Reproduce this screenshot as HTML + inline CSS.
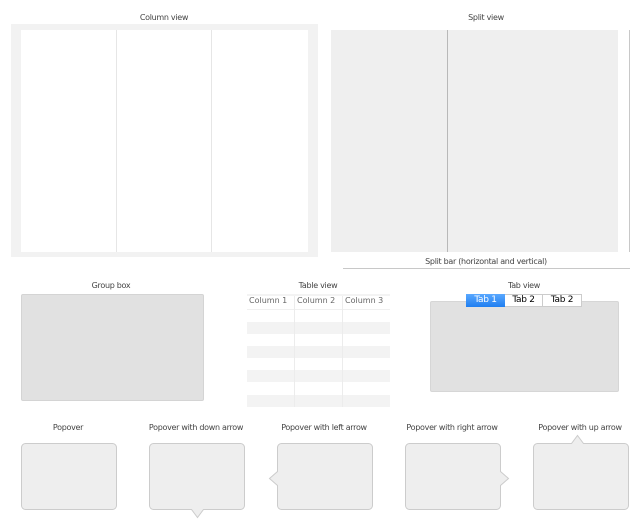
<!DOCTYPE html>
<html><head><style>
body{margin:0;width:640px;height:530px;background:#fff;position:relative;overflow:hidden;font-family:"DejaVu Sans","Liberation Sans",sans-serif;font-size:8px;color:#444}
div{position:absolute;box-sizing:border-box}
.l{text-align:center;white-space:nowrap;letter-spacing:-0.3px}
.pop{background:#eee;border:1px solid #ccc;border-radius:4px;width:96px;height:67px;top:443px}
.th{font-size:8px;color:#666;top:296px}
.st{background:#f3f3f3;left:247px;width:143px;height:12px}
</style></head><body>
<div class="l" style="left:114px;top:13px;width:100px">Column view</div>
<div style="left:11px;top:24px;width:307px;height:233px;background:#f2f2f2"></div>
<div style="left:21px;top:30px;width:287px;height:222px;background:#fff"></div>
<div style="left:116px;top:30px;width:1px;height:222px;background:#e6e6e6"></div>
<div style="left:211px;top:30px;width:1px;height:222px;background:#e6e6e6"></div>

<div class="l" style="left:436px;top:13px;width:100px">Split view</div>
<div style="left:331px;top:30px;width:287px;height:222px;background:#efefef"></div>
<div style="left:447px;top:30px;width:1px;height:222px;background:#b8b8b8"></div>
<div style="left:629px;top:30px;width:1px;height:222px;background:#c8c8c8"></div>
<div class="l" style="left:386px;top:257px;width:200px">Split bar (horizontal and vertical)</div>
<div style="left:343px;top:268px;width:287px;height:1px;background:#c8c8c8"></div>

<div class="l" style="left:61px;top:281px;width:100px">Group box</div>
<div style="left:21px;top:294px;width:183px;height:107px;background:#e1e1e1;border:1px solid #d4d4d4;border-radius:2px"></div>

<div class="l" style="left:268px;top:281px;width:100px">Table view</div>
<div style="left:247px;top:294px;width:143px;height:2px;background:#f3f3f3"></div>
<div class="st" style="top:322px"></div>
<div class="st" style="top:346px"></div>
<div class="st" style="top:370px"></div>
<div class="st" style="top:395px"></div>
<div style="left:247px;top:309px;width:143px;height:1px;background:#f0f0f0"></div>
<div style="left:294px;top:296px;width:1px;height:111px;background:#ececec"></div>
<div style="left:342px;top:296px;width:1px;height:111px;background:#ececec"></div>
<div class="th" style="left:249px">Column 1</div>
<div class="th" style="left:297px">Column 2</div>
<div class="th" style="left:345px">Column 3</div>

<div class="l" style="left:474px;top:281px;width:100px">Tab view</div>
<div style="left:430px;top:301px;width:189px;height:91px;background:#e1e1e1;border:1px solid #d6d6d6;border-radius:2px"></div>
<div style="left:466px;top:294px;width:116px;height:13px;background:#fff;border:1px solid #ccc"></div>
<div class="l" style="left:466px;top:294px;width:39px;height:13px;background:linear-gradient(#5aa8ff,#1f7ef0);color:#fff;font-size:9px;line-height:13px">Tab 1</div>
<div class="l" style="left:505px;top:294px;width:38px;height:13px;color:#000;font-size:9px;line-height:13px;border-right:1px solid #ccc">Tab 2</div>
<div class="l" style="left:543px;top:294px;width:38px;height:13px;color:#000;font-size:9px;line-height:13px">Tab 2</div>

<div class="l" style="left:18px;top:423px;width:100px">Popover</div>
<div class="l" style="left:146px;top:423px;width:100px">Popover with down arrow</div>
<div class="l" style="left:274px;top:423px;width:100px">Popover with left arrow</div>
<div class="l" style="left:402px;top:423px;width:100px">Popover with right arrow</div>
<div class="l" style="left:530px;top:423px;width:100px">Popover with up arrow</div>
<svg style="position:absolute;left:0;top:0" width="640" height="530">
<g fill="#eee" stroke="#ccc">
<rect x="21.5" y="443.5" width="95" height="66" rx="4"/>
<path d="M153.5 443.5h87a4 4 0 0 1 4 4v58a4 4 0 0 1-4 4h-37l-6 8-6-8h-38a4 4 0 0 1-4-4v-58a4 4 0 0 1 4-4z"/>
<path d="M281.5 443.5h87a4 4 0 0 1 4 4v58a4 4 0 0 1-4 4h-87a4 4 0 0 1-4-4v-20l-8-7 8-7v-24a4 4 0 0 1 4-4z"/>
<path d="M409.5 443.5h87a4 4 0 0 1 4 4v24l8 7-8 7v20a4 4 0 0 1-4 4h-87a4 4 0 0 1-4-4v-58a4 4 0 0 1 4-4z"/>
<path d="M537.5 443.5h34l6-8 6 8h41a4 4 0 0 1 4 4v58a4 4 0 0 1-4 4h-87a4 4 0 0 1-4-4v-58a4 4 0 0 1 4-4z"/>
</g></svg>
</body></html>
